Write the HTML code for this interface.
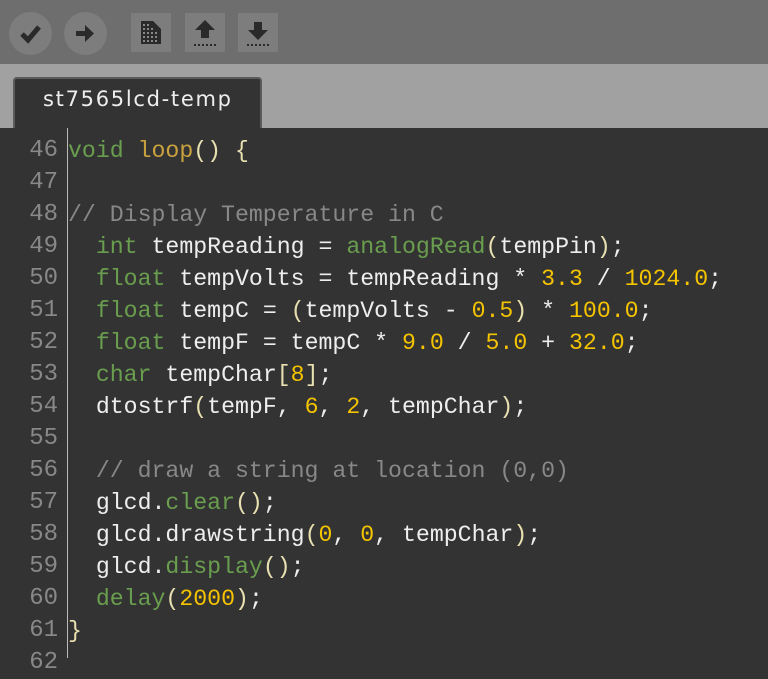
<!DOCTYPE html>
<html><head><style>
html,body{margin:0;width:768px;height:658px;overflow:hidden;background:#333;font-family:"Liberation Mono",monospace}
#tb{position:absolute;left:0;top:0;width:768px;height:64px;background:#6e6e6e}
#strip{position:absolute;left:0;top:64px;width:768px;height:64px;background:#a1a1a1}
.c{position:absolute;top:12px;width:43px;height:43px;border-radius:50%;background:#7d7d7d}
.s{position:absolute;top:13px;width:40px;height:39px;background:#7d7d7d}
#tab{position:absolute;left:13px;top:77px;width:249px;height:51px;background:#333;border:2px solid #5a5a5a;border-bottom:none;border-radius:4px 4px 0 0;box-sizing:border-box}
#tab span{position:absolute;left:28px;top:8px;font-family:"DejaVu Sans",sans-serif;font-size:21px;color:#eee;letter-spacing:1.7px}
#gut{position:absolute;left:0;top:128px;width:67px;height:530px;border-right:1px solid #bbb}
#code{position:absolute;left:0;top:135px;width:768px}
.l{height:32px;line-height:32px;font-size:23.2px;white-space:pre;color:#eee;position:relative}
.n{position:absolute;right:710px;color:#888;font-size:24px}
.t{position:absolute;left:68px}
.k{color:#6a9e4f}.f{color:#c9a23f}.p{color:#e8e0b0}.y{color:#f5c400}.cm{color:#888}.g{color:#6a9e4f}
</style></head><body>
<div id="tb">
<div class="c" style="left:9px"><svg width="43" height="43"><path d="M13 22 L19 28 L30 15" stroke="#2a2a2a" stroke-width="5" fill="none"/></svg></div>
<div class="c" style="left:64px"><svg width="43" height="43"><path d="M12 19h9v-6l9 8.5-9 8.5v-6h-9z" fill="#2a2a2a"/></svg></div>
<div class="s" style="left:131px"><svg width="40" height="39"><path d="M10 8h12l8 8v15h-20z" fill="#2a2a2a"/><g fill="#888"><rect x="12" y="11" width="2" height="2"/><rect x="16" y="11" width="2" height="2"/><rect x="12" y="15" width="2" height="2"/><rect x="16" y="15" width="2" height="2"/><rect x="20" y="15" width="2" height="2"/><rect x="12" y="19" width="2" height="2"/><rect x="16" y="19" width="2" height="2"/><rect x="20" y="19" width="2" height="2"/><rect x="24" y="19" width="2" height="2"/><rect x="12" y="23" width="2" height="2"/><rect x="16" y="23" width="2" height="2"/><rect x="20" y="23" width="2" height="2"/><rect x="24" y="23" width="2" height="2"/><rect x="12" y="27" width="2" height="2"/><rect x="16" y="27" width="2" height="2"/><rect x="20" y="27" width="2" height="2"/><rect x="24" y="27" width="2" height="2"/></g></svg></div>
<div class="s" style="left:185px"><svg width="40" height="39"><path d="M20 7l10 10h-6v8h-8v-8h-6z" fill="#2a2a2a"/><path d="M9 32h22" stroke="#2a2a2a" stroke-width="2" stroke-dasharray="2 2"/></svg></div>
<div class="s" style="left:238px"><svg width="40" height="39"><path d="M20 27l10-10h-6v-8h-8v8h-6z" fill="#2a2a2a"/><path d="M9 32h22" stroke="#2a2a2a" stroke-width="2" stroke-dasharray="2 2"/></svg></div>
</div>
<div id="strip"></div>
<div id="tab"><span>st7565lcd-temp</span></div>
<div id="gut"></div>
<div id="code">
<div class="l"><span class="n">46</span><span class="t"><span class="k">void</span> <span class="f">loop</span><span class="p">()</span> <span class="p">{</span></span></div>
<div class="l"><span class="n">47</span></div>
<div class="l"><span class="n">48</span><span class="t cm">// Display Temperature in C</span></div>
<div class="l"><span class="n">49</span><span class="t">  <span class="k">int</span> tempReading = <span class="g">analogRead</span><span class="p">(</span>tempPin<span class="p">)</span>;</span></div>
<div class="l"><span class="n">50</span><span class="t">  <span class="k">float</span> tempVolts = tempReading * <span class="y">3.3</span> / <span class="y">1024.0</span>;</span></div>
<div class="l"><span class="n">51</span><span class="t">  <span class="k">float</span> tempC = <span class="p">(</span>tempVolts - <span class="y">0.5</span><span class="p">)</span> * <span class="y">100.0</span>;</span></div>
<div class="l"><span class="n">52</span><span class="t">  <span class="k">float</span> tempF = tempC * <span class="y">9.0</span> / <span class="y">5.0</span> + <span class="y">32.0</span>;</span></div>
<div class="l"><span class="n">53</span><span class="t">  <span class="k">char</span> tempChar<span class="p">[</span><span class="y">8</span><span class="p">]</span>;</span></div>
<div class="l"><span class="n">54</span><span class="t">  dtostrf<span class="p">(</span>tempF, <span class="y">6</span>, <span class="y">2</span>, tempChar<span class="p">)</span>;</span></div>
<div class="l"><span class="n">55</span></div>
<div class="l"><span class="n">56</span><span class="t cm">  // draw a string at location (0,0)</span></div>
<div class="l"><span class="n">57</span><span class="t">  glcd.<span class="g">clear</span><span class="p">()</span>;</span></div>
<div class="l"><span class="n">58</span><span class="t">  glcd.drawstring<span class="p">(</span><span class="y">0</span>, <span class="y">0</span>, tempChar<span class="p">)</span>;</span></div>
<div class="l"><span class="n">59</span><span class="t">  glcd.<span class="g">display</span><span class="p">()</span>;</span></div>
<div class="l"><span class="n">60</span><span class="t">  <span class="g">delay</span><span class="p">(</span><span class="y">2000</span><span class="p">)</span>;</span></div>
<div class="l"><span class="n">61</span><span class="t p">}</span></div>
<div class="l"><span class="n">62</span></div>
</div>
</body></html>
